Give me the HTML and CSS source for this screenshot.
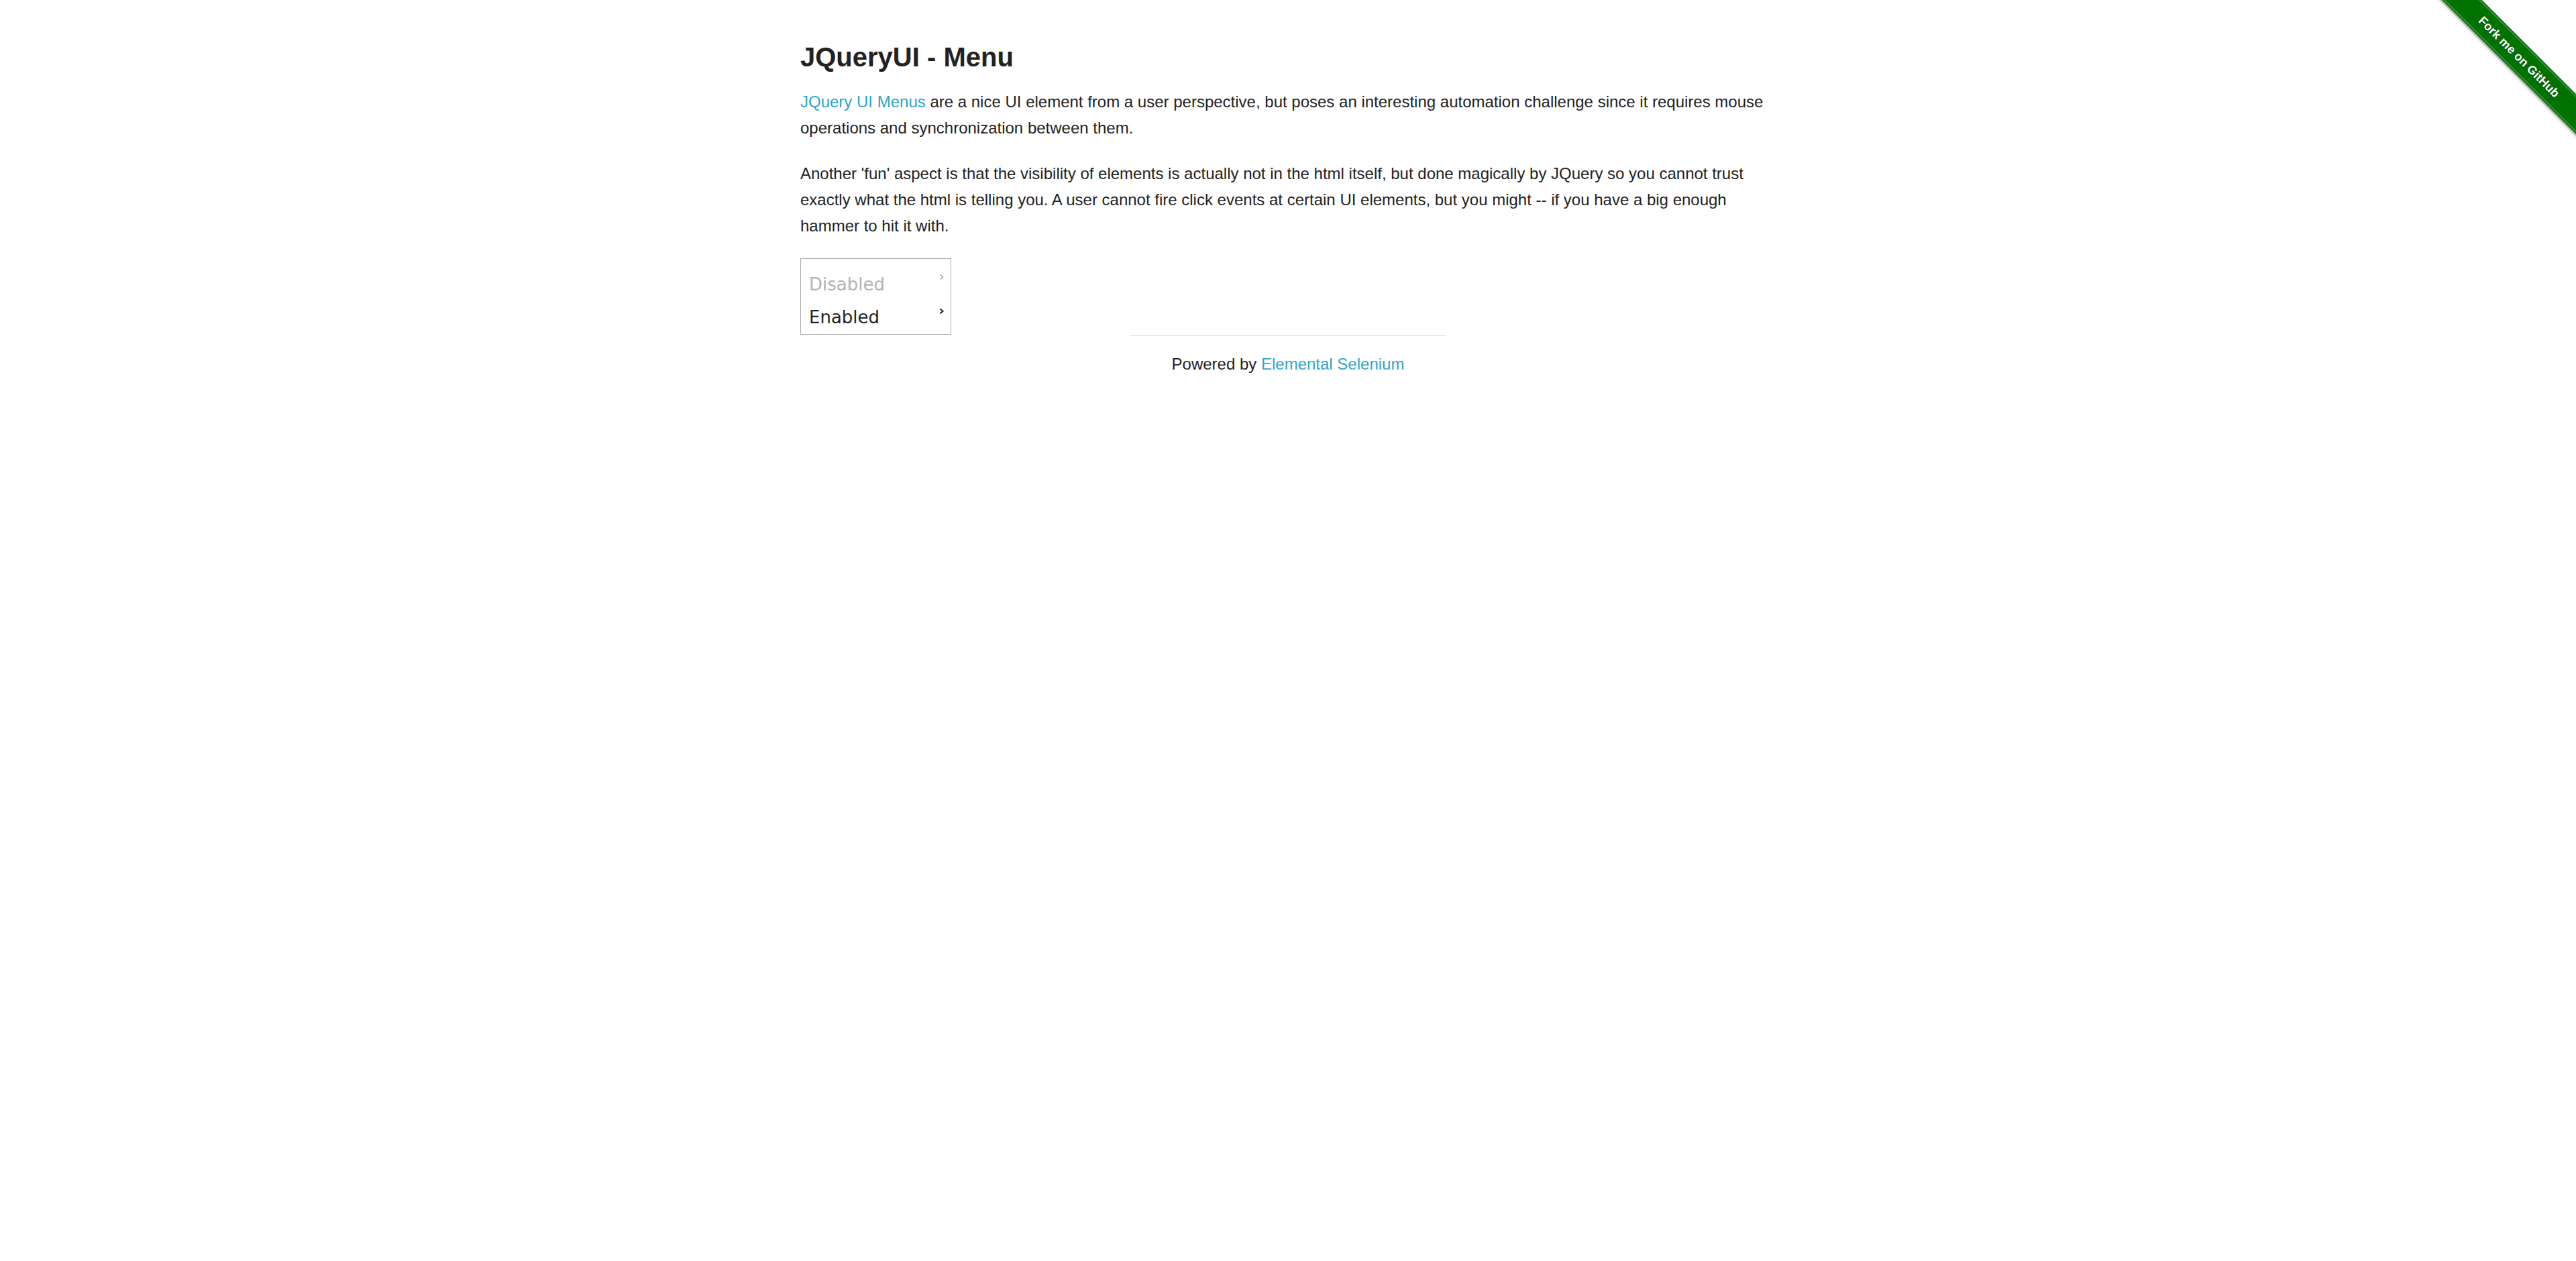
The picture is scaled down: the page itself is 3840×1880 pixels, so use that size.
FILE: index.html
```html
<!DOCTYPE html>
<html lang="en">
<head>
<meta charset="utf-8">
<title>The Internet</title>
<link rel="stylesheet" href="styles.css">
</head>
<body>
<div class="page">
  <div class="content">
    <h3 class="title">JQueryUI - Menu</h3>
    <p class="text"><a class="link" href="#">JQuery UI Menus</a> are a nice UI element from a user perspective, but poses an interesting automation challenge since it requires mouse operations and synchronization between them.</p>
    <p class="text">Another 'fun' aspect is that the visibility of elements is actually not in the html itself, but done magically by JQuery so you cannot trust exactly what the html is telling you. A user cannot fire click events at certain UI elements, but you might -- if you have a big enough hammer to hit it with.</p>
    <ul class="menu">
      <li class="item item-disabled">
        <span class="item-label">Disabled</span>
        <svg class="caret" width="8" height="10" viewBox="0 0 8 10"><polyline points="1.5,1.5 5.5,5 1.5,8.5" fill="none" stroke="currentColor" stroke-width="1.6"/></svg>
      </li>
      <li class="item">
        <span class="item-label">Enabled</span>
        <svg class="caret" width="8" height="10" viewBox="0 0 8 10"><polyline points="1.5,1.5 5.5,5 1.5,8.5" fill="none" stroke="currentColor" stroke-width="2"/></svg>
      </li>
    </ul>
  </div>
  <div class="footer">
    <hr class="rule">
    <div class="powered">Powered by <a class="link" href="#">Elemental Selenium</a></div>
  </div>
</div>
<div class="ribbon">
  <a class="ribbon-band" href="#">Fork me on GitHub</a>
</div>
</body>
</html>
```
FILE: styles.css
```css
html, body {
  margin: 0;
  padding: 0;
  background: #ffffff;
}
body {
  font-family: "Liberation Sans", Arial, Helvetica, sans-serif;
  color: #222222;
  font-size: 24px;
  line-height: 39px;
}
.page {
  width: 1454px;
  margin: 0 auto;
  padding-top: 62px;
}
.title {
  margin: 0 0 24px;
  font-size: 40px;
  line-height: 46px;
  font-weight: bold;
  color: #222222;
}
.text {
  margin: 0 0 29px;
}
.link {
  color: #2ba6cb;
  text-decoration: none;
}
.menu {
  list-style: none;
  margin: 0;
  padding: 14px 0 0;
  width: 225px;
  box-sizing: border-box;
  border: 1px solid #aaaaaa;
  font-family: "DejaVu Sans", Verdana, sans-serif;
  font-size: 26px;
}
.item {
  display: flex;
  justify-content: space-between;
  align-items: flex-start;
  height: 49px;
  line-height: 49px;
  padding: 0 9px 0 12px;
  color: #222222;
}
.item-disabled {
  color: #b3b3b3;
}
.item-disabled .caret {
  color: #a8a8a8;
  margin-top: 8px;
}
.caret {
  display: block;
  color: #222222;
  margin-top: 10px;
}
.footer {
  text-align: center;
}
.rule {
  width: 470px;
  margin: 1px auto 0;
  border: 0;
  border-top: 1px solid #dddddd;
  height: 0;
}
.powered {
  margin-top: 22px;
}
.ribbon {
  position: absolute;
  top: 0;
  right: 0;
  width: 300px;
  height: 300px;
  overflow: hidden;
}
.ribbon-band {
  position: absolute;
  left: -5px;
  top: 64px;
  width: 440px;
  height: 42px;
  box-sizing: border-box;
  transform: rotate(45deg);
  background: #007200;
  color: #ffffff;
  font-family: "Liberation Sans", Arial, sans-serif;
  font-weight: bold;
  font-size: 18px;
  line-height: 42px;
  text-align: center;
  text-decoration: none;
  text-shadow: 0 1px 1px rgba(0, 0, 0, 0.5);
  box-shadow: 0 2px 4px rgba(0, 0, 0, 0.45);
}
.ribbon-band::before {
  content: "";
  position: absolute;
  left: 0;
  right: 0;
  top: 2px;
  bottom: 2px;
  border-top: 1px solid rgba(255, 255, 255, 0.45);
  border-bottom: 1px solid rgba(255, 255, 255, 0.45);
}
```
